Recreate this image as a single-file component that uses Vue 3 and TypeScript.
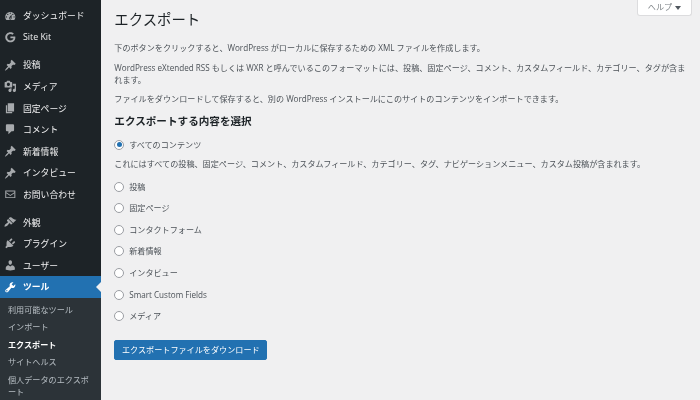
<script setup lang="ts">
const p: Record<string, string> = {
  dash: 'M3.76 16h12.48c1.1-1.37 1.76-3.11 1.76-5 0-4.42-3.58-8-8-8s-8 3.58-8 8c0 1.89.66 3.63 1.76 5zM10 4c.55 0 1 .45 1 1s-.45 1-1 1-1-.45-1-1 .45-1 1-1zM6 6c.55 0 1 .45 1 1s-.45 1-1 1-1-.45-1-1 .45-1 1-1zm8 0c.55 0 1 .45 1 1s-.45 1-1 1-1-.45-1-1 .45-1 1-1zm-5.37 5.55L12 7v6c0 1.1-.9 2-2 2s-2-.9-2-2c0-.57.24-1.08.63-1.45zM4 10c.55 0 1 .45 1 1s-.45 1-1 1-1-.45-1-1 .45-1 1-1zm12 0c.55 0 1 .45 1 1s-.45 1-1 1-1-.45-1-1 .45-1 1-1zm-5 3c0-.55-.45-1-1-1s-1 .45-1 1 .45 1 1 1 1-.45 1-1z',
  pin: 'M10.44 3.02l1.82-1.82 6.36 6.35-1.83 1.82c-1.05-.68-2.48-.57-3.41.36l-.75.75c-.92.93-1.04 2.35-.35 3.41l-1.83 1.82-2.41-2.41-2.8 2.79c-.42.42-3.38 2.71-3.8 2.29s1.86-3.39 2.28-3.81l2.79-2.79L4.1 9.36l1.83-1.82c1.05.69 2.48.57 3.4-.36l.75-.75c.93-.92 1.05-2.35.36-3.41z',
  media: 'M13 11V4c0-.55-.45-1-1-1h-1.67L9 1H5L3.67 3H2c-.55 0-1 .45-1 1v7c0 .55.45 1 1 1h10c.55 0 1-.45 1-1zM7 4.5c1.38 0 2.5 1.12 2.5 2.5S8.38 9.5 7 9.5 4.5 8.38 4.5 7 5.62 4.5 7 4.5zM14 6h5v10.5c0 1.38-1.12 2.5-2.5 2.5S14 17.88 14 16.5s1.12-2.5 2.5-2.5c.17 0 .34.02.5.05V9h-3V6zm-4 8.05V13h2v3.5c0 1.38-1.12 2.5-2.5 2.5S7 17.88 7 16.5 8.12 14 9.5 14c.17 0 .34.02.5.05z',
  page: 'M6 15V2h10v13H6zm-1 1h8v2H3V5h2v11z',
  comment: 'M5 2h9c1.1 0 2 .9 2 2v7c0 1.1-.9 2-2 2h-2l-5 5v-5H5c-1.1 0-2-.9-2-2V4c0-1.1.9-2 2-2z',
  mail: 'M2 4h16v12H2zM3.5 5.5v1.2L10 11l6.5-4.3V5.5zM3.5 8.5v6h13v-6L10 12.8z',
  brush: 'M14.48 11.06L7.41 3.99l1.5-1.5c.5-.56 2.3-.47 3.51.32 1.21.8 1.43 1.28 2.91 2.1 1.18.64 2.45 1.26 4.45.85zm-.71.71L6.7 4.7 4.93 6.47c-.39.39-.39 1.02 0 1.41l1.06 1.06c.39.39.39 1.03 0 1.42-.6.6-1.43 1.11-2.21 1.69-.35.26-.7.53-1.01.84C1.43 13.71.5 16.5 1 17c.5.5 3.3-.43 4.5-1.78.31-.31.58-.66.84-1.01.58-.78 1.09-1.61 1.69-2.21.39-.39 1.03-.39 1.42 0l1.06 1.06c.39.39 1.02.39 1.41 0z',
  plug: 'M13.11 4.36L9.87 7.6 8 5.73l3.24-3.24c.35-.34 1.05-.2 1.56.32.52.51.66 1.21.31 1.55zm-8 1.77l.91-1.12 9.01 9.01-1.19.84c-.71.71-2.63 1.16-3.82 1.16H6.14L4.9 17.26c-.59.59-1.54.59-2.12 0-.59-.58-.59-1.53 0-2.12l1.24-1.24v-3.88c0-1.13.4-3.19 1.09-3.89zm7.26 3.97l3.24-3.24c.34-.35 1.04-.21 1.55.31.52.51.66 1.21.31 1.55l-3.24 3.25z',
  user: 'M10 9.25c-2.27 0-2.73-3.44-2.73-3.44C7 4.02 7.82 2 9.97 2c2.16 0 2.98 2.02 2.71 3.81 0 0-.41 3.44-2.68 3.44zm0 2.57L12.72 10c2.39 0 4.52 2.33 4.52 4.53v2.49s-3.65 1.13-7.24 1.13c-3.65 0-7.24-1.13-7.24-1.13v-2.49c0-2.25 1.94-4.48 4.47-4.48z',
  tool: 'M16.68 9.77c-1.34 1.34-3.3 1.67-4.95.99l-5.41 6.52c-.99.99-2.59.99-3.58 0s-.99-2.59 0-3.57l6.52-5.42c-.68-1.65-.35-3.61.99-4.95 1.28-1.28 3.12-1.62 4.72-1.06l-2.89 2.89 2.82 2.82 2.86-2.87c.53 1.58.18 3.39-1.08 4.65zM3.81 16.21c.4.39 1.04.39 1.43 0 .4-.4.4-1.04 0-1.43-.39-.4-1.03-.4-1.43 0-.39.39-.39 1.03 0 1.43z',
  g: 'M10.2 2C5.7 2 2 5.6 2 10s3.7 8 8.2 8c4.7 0 7.8-3.2 7.8-7.8 0-.5 0-.9-.1-1.3h-7.7v2.7h4.8c-.4 2-2.2 3.6-4.8 3.6-2.9 0-5.2-2.3-5.2-5.2s2.3-5.2 5.2-5.2c1.3 0 2.5.5 3.4 1.3l2-2C14.2 2.8 12.3 2 10.2 2z',
}
const groups = [
  [{ t: 'ダッシュボード', i: 'dash' }, { t: 'Site Kit', i: 'g' }],
  [
    { t: '投稿', i: 'pin' }, { t: 'メディア', i: 'media' }, { t: '固定ページ', i: 'page' },
    { t: 'コメント', i: 'comment' }, { t: '新着情報', i: 'pin' }, { t: 'インタビュー', i: 'pin' },
    { t: 'お問い合わせ', i: 'mail' },
  ],
  [{ t: '外観', i: 'brush' }, { t: 'プラグイン', i: 'plug' }, { t: 'ユーザー', i: 'user' }],
]
const sub = ['利用可能なツール', 'インポート', 'エクスポート', 'サイトヘルス', '個人データのエクスポート']
const options = ['投稿', '固定ページ', 'コンタクトフォーム', '新着情報', 'インタビュー', 'Smart Custom Fields', 'メディア']
</script>

<template>
  <div class="page">
    <aside class="side">
      <ul v-for="(g, n) in groups" :key="n" class="group">
        <li v-for="m in g" :key="m.t" class="item">
          <svg class="ico" viewBox="0 0 20 20"><path :d="p[m.i]" fill-rule="evenodd" /></svg>
          <span>{{ m.t }}</span>
        </li>
      </ul>
      <div class="item active">
        <svg class="ico" viewBox="0 0 20 20"><path :d="p.tool" fill-rule="evenodd" /></svg>
        <span>ツール</span>
        <i class="arrow"></i>
      </div>
      <ul class="sub">
        <li v-for="s in sub" :key="s" :class="{ cur: s === 'エクスポート' }">{{ s }}</li>
      </ul>
    </aside>

    <main class="main">
      <div class="help">ヘルプ <span class="tri"></span></div>
      <h1>エクスポート</h1>
      <p>下のボタンをクリックすると、WordPress がローカルに保存するための XML ファイルを作成します。</p>
      <p>WordPress eXtended RSS もしくは WXR と呼んでいるこのフォーマットには、投稿、固定ページ、コメント、カスタムフィールド、カテゴリー、タグが含まれます。</p>
      <p>ファイルをダウンロードして保存すると、別の WordPress インストールにこのサイトのコンテンツをインポートできます。</p>
      <h2>エクスポートする内容を選択</h2>
      <label class="radio">
        <span class="dot on"></span>すべてのコンテンツ
      </label>
      <p class="note">これにはすべての投稿、固定ページ、コメント、カスタムフィールド、カテゴリー、タグ、ナビゲーションメニュー、カスタム投稿が含まれます。</p>
      <label v-for="o in options" :key="o" class="radio">
        <span class="dot"></span>{{ o }}
      </label>
      <button class="btn" type="button">エクスポートファイルをダウンロード</button>
    </main>
  </div>
</template>

<style>
html, body { margin: 0; overflow: hidden; }
</style>

<style scoped>
.page {
  display: flex;
  width: 700px;
  height: 400px;
  overflow: hidden;
  background: #f0f0f1;
  font-family: "Open Sans", "Noto Sans CJK JP", sans-serif;
  position: relative;
  filter: blur(0.3px);
}
.side {
  width: 101px;
  flex: none;
  background: #1d2327;
  padding-top: 5px;
  box-sizing: border-box;
  overflow: hidden;
}
ul { list-style: none; margin: 0; padding: 0; }
.group { margin-bottom: 6px; }
.group:nth-of-type(3) { margin-bottom: 0; }
.item {
  height: 21.6px;
  display: flex;
  align-items: center;
  color: #f0f0f1;
  font-size: 8.8px;
  position: relative;
}
.ico {
  width: 12.6px;
  height: 12.6px;
  margin: 0 6px 0 4.4px;
  flex: none;
  fill: #a7aaad;
}
.active { background: #2271b1; color: #fff; font-weight: 600; }
.active .ico { fill: #fff; }
.arrow {
  position: absolute;
  right: 0;
  top: 50%;
  margin-top: -5px;
  border: 5px solid transparent;
  border-right-color: #f0f0f1;
  border-left-width: 0;
}
.sub {
  background: #2c3338;
  padding: 3.7px 0 6px;
  font-size: 8.12px;
  line-height: 12px;
  color: rgba(240, 246, 252, 0.7);
}
.sub li { padding: 2.7px 8px 2.7px 8px; }
.sub .cur { color: #fff; font-weight: 600; }

.main {
  flex: 1;
  padding: 11px 14px 0 13.3px;
  color: #4b5157;
  font-size: 8.12px;
  line-height: 12.2px;
  min-width: 0;
}
.help {
  position: absolute;
  top: 0;
  right: 8px;
  width: 55px;
  height: 16px;
  box-sizing: border-box;
  background: #fff;
  border: 1px solid #dcdcde;
  border-top: 0;
  border-radius: 0 0 3px 3px;
  color: #7b8085;
  font-size: 8.12px;
  display: flex;
  align-items: center;
  justify-content: center;
  gap: 3px;
}
.tri {
  border: 3px solid transparent;
  border-top: 4px solid #50575e;
  border-bottom: 0;
}
h1 {
  margin: 0 0 13px;
  font-size: 14.4px;
  line-height: 18px;
  font-weight: 400;
  color: #1d2327;
}
p { margin: 0 0 7.4px; }
h2 {
  margin: 8px 0 6.5px;
  font-size: 10.6px;
  line-height: 14px;
  font-weight: 600;
  color: #1d2327;
}
.radio {
  display: flex;
  align-items: center;
  height: 21.6px;
}
.dot {
  width: 10px;
  height: 10px;
  box-sizing: border-box;
  border: 1px solid #9b9ea3;
  border-radius: 50%;
  background: #fff;
  margin-right: 4.9px;
  flex: none;
  display: flex;
  align-items: center;
  justify-content: center;
}
.dot.on::after {
  content: "";
  width: 5px;
  height: 5px;
  border-radius: 50%;
  background: #2271b1;
}
.note { margin: 2.5px 0 5.5px; }
.btn {
  display: block;
  margin-top: 13px;
  width: 153px;
  height: 19.5px;
  padding: 0;
  border: 1px solid #2271b1;
  border-radius: 2px;
  background: #2271b1;
  color: #fff;
  font: inherit;
  font-size: 8.12px;
}
</style>
